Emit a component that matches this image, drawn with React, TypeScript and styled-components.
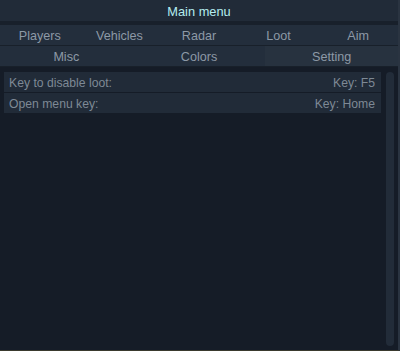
import React from "react";
import styled, { createGlobalStyle } from "styled-components";

const Global = createGlobalStyle`
  html, body { margin: 0; padding: 0; background: #151c27; }
  body { font-family: "Liberation Sans", Arial, sans-serif; font-size: 12.5px; }
`;

const Frame = styled.div`
  width: 400px;
  height: 351px;
  box-sizing: border-box;
  border-right: 2px solid #2a3441;
  border-bottom: 1px solid #3a3a2e;
  background: #151c27;
  display: flex;
  flex-direction: column;
`;

const Title = styled.div`
  height: 21px;
  background: #212b38;
  color: #b4eef0;
  font-size: 12.8px;
  display: flex;
  align-items: center;
  justify-content: center;
  padding-top: 2px;
  box-sizing: border-box;
`;

const Spacer = styled.div`
  height: 4px;
  background: #18202b;
`;

const TabRow = styled.div<{ $cols: number }>`
  display: grid;
  grid-template-columns: repeat(${(p) => p.$cols}, 1fr);
  height: 20px;
  background: #232e3c;
  border-bottom: 1px solid #18202a;
`;

const Tab = styled.div<{ $active?: boolean }>`
  display: flex;
  align-items: center;
  justify-content: center;
  padding-top: 1px;
  box-sizing: border-box;
  color: #8d99a6;
  font-size: 12.6px;
  background: ${(p) => (p.$active ? "#27323f" : "transparent")};
`;

const Body = styled.div`
  flex: 1;
  display: flex;
  gap: 5px;
  padding: 5px 4px 4px 4px;
  min-height: 0;
`;

const List = styled.div`
  flex: 1;
  display: flex;
  flex-direction: column;
  gap: 1px;
`;

const Row = styled.div`
  height: 20px;
  box-sizing: border-box;
  background: #212b38;
  display: flex;
  align-items: center;
  justify-content: space-between;
  padding: 2px 6px 0 5px;
  color: #7e8995;
  font-size: 12.2px;
`;

const Scrollbar = styled.div`
  width: 8px;
  background: #222c39;
  border-radius: 4px;
`;

const tabs1 = ["Players", "Vehicles", "Radar", "Loot", "Aim"];
const tabs2 = ["Misc", "Colors", "Setting"];
const rows = [
  ["Key to disable loot:", "Key: F5"],
  ["Open menu key:", "Key: Home"],
];

export default function App() {
  return (
    <>
      <Global />
      <Frame>
        <Title>Main menu</Title>
        <Spacer />
        <TabRow $cols={5}>
          {tabs1.map((t) => (
            <Tab key={t}>{t}</Tab>
          ))}
        </TabRow>
        <TabRow $cols={3}>
          {tabs2.map((t) => (
            <Tab key={t} $active={t === "Setting"}>
              {t}
            </Tab>
          ))}
        </TabRow>
        <Body>
          <List>
            {rows.map(([l, v]) => (
              <Row key={l}>
                <span>{l}</span>
                <span>{v}</span>
              </Row>
            ))}
          </List>
          <Scrollbar />
        </Body>
      </Frame>
    </>
  );
}
